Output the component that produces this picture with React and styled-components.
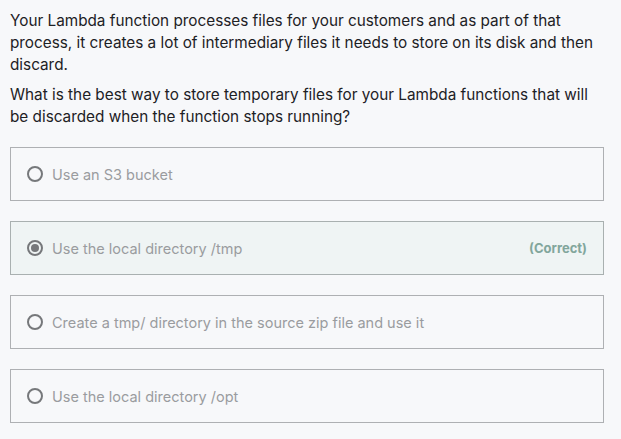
import React from "react";
import styled, { createGlobalStyle } from "styled-components";

const GlobalStyle = createGlobalStyle`
  body {
    margin: 0;
    background: #f7f8fa;
    font-family: Inter, "Noto Sans", sans-serif;
  }
`;

const Page = styled.div`
  padding: 10px 17px 0 10px;
  display: flex;
  flex-direction: column;
`;

const Question = styled.p`
  margin: 0 0 8px;
  font-size: 15.3px;
  line-height: 22px;
  color: #1d2125;
`;

const Options = styled.div`
  margin-top: 11px;
  display: flex;
  flex-direction: column;
  gap: 20px;
`;

const Option = styled.div`
  display: flex;
  align-items: center;
  height: 54px;
  box-sizing: border-box;
  padding: 0 16px 0 16px;
  border: 1px solid ${(p) => (p.$correct ? "#a9b0b0" : "#aeb0b3")};
  background: ${(p) => (p.$correct ? "#eff4f4" : "transparent")};
`;

const Radio = styled.span`
  width: 16px;
  height: 16px;
  box-sizing: border-box;
  border-radius: 50%;
  border: 2px solid #76787b;
  display: flex;
  align-items: center;
  justify-content: center;
  margin-right: 9px;
  flex-shrink: 0;

  &::after {
    content: "";
    display: ${(p) => (p.$checked ? "block" : "none")};
    width: 8px;
    height: 8px;
    border-radius: 50%;
    background: #76787b;
  }
`;

const Label = styled.span`
  flex: 1;
  font-size: 14.5px;
  color: #9a9c9f;
`;

const Verdict = styled.span`
  font-size: 13px;
  font-weight: 700;
  color: #82a69c;
`;

const options = [
  { text: "Use an S3 bucket" },
  { text: "Use the local directory /tmp", checked: true, correct: true },
  { text: "Create a tmp/ directory in the source zip file and use it" },
  { text: "Use the local directory /opt" },
];

export default function App() {
  return (
    <>
      <GlobalStyle />
      <Page>
        <Question>
          Your Lambda function processes files for your customers and as part
          of that process, it creates a lot of intermediary files it needs to
          store on its disk and then discard.
        </Question>
        <Question>
          What is the best way to store temporary files for your Lambda
          functions that will be discarded when the function stops running?
        </Question>
        <Options>
          {options.map((o) => (
            <Option key={o.text} $correct={o.correct}>
              <Radio $checked={o.checked} />
              <Label>{o.text}</Label>
              {o.correct && <Verdict>(Correct)</Verdict>}
            </Option>
          ))}
        </Options>
      </Page>
    </>
  );
}
